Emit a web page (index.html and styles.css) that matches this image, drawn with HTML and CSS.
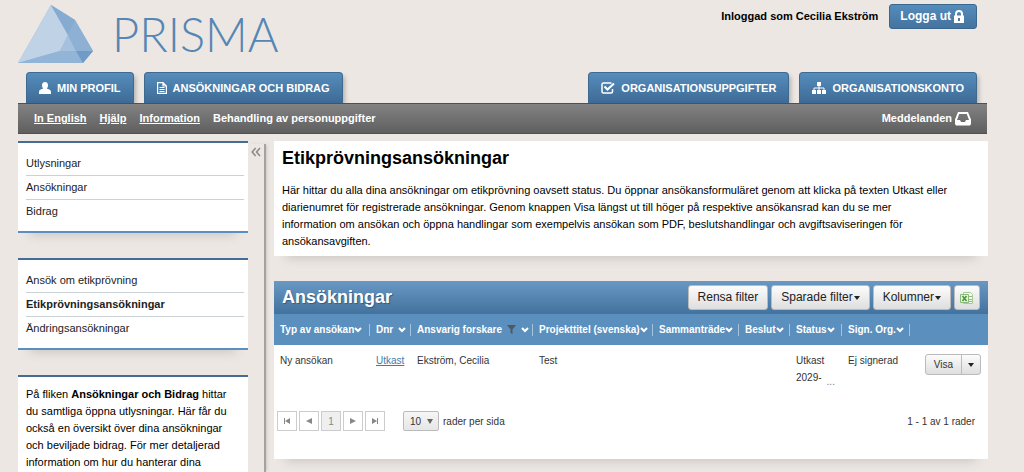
FILE: index.html
```html
<!DOCTYPE html>
<html lang="sv">
<head>
<meta charset="utf-8">
<meta name="viewport" content="width=device-width, initial-scale=1">
<title>Prisma – Etikprövningsansökningar</title>
<link rel="stylesheet" href="styles.css">
</head>
<body>
<div class="page">
  <header class="header">
    <div class="masthead">
      <a class="logo" href="#">
        <svg class="logo-mark" viewBox="0 0 76 60" width="76" height="60" aria-hidden="true">
          <path fill="#8fb3d6" d="M33 1 57 16 75 47 65 59H0z"/>
          <path fill="#c0d3e6" d="M33 1 50 31 42 47 0 59z"/>
          <path fill="#a5c1de" d="M50 31 58 47H42z"/>
          <path fill="#86abd0" d="M33 1 57 16 50 31z"/>
          <path fill="#8db0d4" d="M57 16 75 47H58L50 31z"/>
          <path fill="#92b4d7" d="M0 59 42 47H58L65 59z"/>
          <path fill="#709bc7" d="M58 47H75L65 59z"/>
        </svg>
        <span class="logo-name">PRISMA</span>
      </a>
      <div class="account">
        <span class="account-name">Inloggad som Cecilia Ekström</span>
        <button class="logout" type="button">Logga ut
          <svg width="10" height="13" viewBox="0 0 10 13" aria-hidden="true"><path fill="none" stroke="#fff" stroke-width="2" d="M2 6V4a3 3 0 0 1 6 0v2"/><path fill="#fff" fill-rule="evenodd" d="M0 5.500h10V13H0zM4 8v3h2V8z"/></svg>
        </button>
      </div>
    </div>
    <nav class="tabs" aria-label="Huvudmeny">
      <a class="tab" href="#"><svg width="12" height="12" viewBox="0 0 12 12" aria-hidden="true"><path fill="#fff" d="M6 0c2 0 3 1.300 3 3.200C9 5 8.300 6 7.600 6.600C10 7.200 12 8 12 10V12H0v-2C0 8 2 7.200 4.400 6.600C3.700 6 3 5 3 3.200 3 1.300 4 0 6 0z"/></svg>MIN PROFIL</a>
      <a class="tab" href="#"><svg width="10" height="12" viewBox="0 0 10 12" aria-hidden="true"><path fill="none" stroke="#fff" stroke-width="1.200" d="M.6.6h5.400l3.400 3.400v7.400H.6zM6 .6V4h3.400M2.500 5.500h5M2.500 7.500h5M2.500 9.500h5"/></svg>ANSÖKNINGAR OCH BIDRAG</a>
      <span class="tabs-gap"></span>
      <a class="tab" href="#"><svg width="14" height="12" viewBox="0 0 14 12" aria-hidden="true"><path fill="none" stroke="#fff" stroke-width="1.500" d="M11.500 7v2.500a1.500 1.500 0 0 1-1.500 1.500H2.500A1.500 1.500 0 0 1 1 9.500v-7A1.500 1.500 0 0 1 2.500 1H10.500"/><path fill="none" stroke="#fff" stroke-width="2" d="m3.500 4.500 3 3 6.500-6"/></svg>ORGANISATIONSUPPGIFTER</a>
      <a class="tab" href="#"><svg width="14" height="12" viewBox="0 0 14 12" aria-hidden="true"><path fill="#fff" d="M5 0h4v4H5zM0 8h4v4H0zM5 8h4v4H5zM10 8h4v4h-4z"/><path fill="none" stroke="#fff" stroke-width="1" d="M7 3v6M2 9V6h10v3"/></svg>ORGANISATIONSKONTO</a>
    </nav>
    <nav class="links" aria-label="Länkar">
      <a href="#">In English</a>
      <a href="#">Hjälp</a>
      <a href="#">Information</a>
      <a class="plain" href="#">Behandling av personuppgifter</a>
      <a class="plain messages" href="#">Meddelanden
        <svg width="16" height="14" viewBox="0 0 16 14" aria-hidden="true"><path fill="#fff" fill-rule="evenodd" d="M3 0h10l3 7.500V12l-1 1.500H1L0 12V7.500zM4.200 2 2 8h3l1 2h4l1-2h3l-2.200-6z"/></svg>
      </a>
    </nav>
  </header>

  <div class="body">
    <aside class="sidebar">
      <nav class="box menu" aria-label="Bidrag">
        <a href="#">Utlysningar</a>
        <a href="#">Ansökningar</a>
        <a href="#">Bidrag</a>
      </nav>
      <nav class="box menu" aria-label="Etikprövning">
        <a href="#">Ansök om etikprövning</a>
        <a href="#" class="current" aria-current="page">Etikprövningsansökningar</a>
        <a href="#">Ändringsansökningar</a>
      </nav>
      <section class="box info">
        <p>På fliken <strong>Ansökningar och Bidrag</strong> hittar<br>du samtliga öppna utlysningar. Här får du<br>också en översikt över dina ansökningar<br>och beviljade bidrag. För mer detaljerad<br>information om hur du hanterar dina</p>
      </section>
    </aside>
    <div class="divider">
      <button class="collapse" type="button" aria-label="Dölj menyn"><svg width="10" height="10" viewBox="0 0 10 10" aria-hidden="true"><path fill="none" stroke="#8a8886" stroke-width="1.500" d="M4.700 1 1.200 5l3.500 4M9 1 5.500 5 9 9"/></svg></button>
    </div>
    <main class="content">
      <section class="card intro">
        <h1>Etikprövningsansökningar</h1>
        <p>Här hittar du alla dina ansökningar om etikprövning oavsett status. Du öppnar ansökansformuläret genom att klicka på texten Utkast eller<br>diarienumret för registrerade ansökningar. Genom knappen Visa längst ut till höger på respektive ansökansrad kan du se mer<br>information om ansökan och öppna handlingar som exempelvis ansökan som PDF, beslutshandlingar och avgiftsaviseringen för<br>ansökansavgiften.</p>
      </section>
      <section class="card">
        <div class="toolbar">
          <h2>Ansökningar</h2>
          <button class="btn" type="button">Rensa filter</button>
          <button class="btn" type="button">Sparade filter<span class="caret"></span></button>
          <button class="btn" type="button">Kolumner<span class="caret"></span></button>
          <button class="btn btn-icon" type="button" aria-label="Exportera till Excel"><svg width="14" height="14" viewBox="0 0 14 14" aria-hidden="true"><path fill="#f5faf2" stroke="#a5cb95" d="M3.500 1.500h7l2 2v9h-9z"/><path stroke="#8fbd7c" d="M9 5.500h3M9 8.500h3M9 10.500h3"/><path fill="#e4f1dd" stroke="#8abb78" d="M.5 3.500h8v8h-8z"/><path stroke="#4c9140" stroke-width="1.500" d="m2.500 5 4 5M6.500 5l-4 5"/></svg></button>
        </div>
        <table class="grid">
          <colgroup><col class="c-type"><col class="c-dnr"><col class="c-researcher"><col class="c-title"><col class="c-meeting"><col class="c-decision"><col class="c-status"><col class="c-sign"><col class="c-action"></colgroup>
          <thead>
            <tr>
              <th scope="col"><span class="head">Typ av ansökan<svg class="chev" viewBox="0 0 8 6"><path d="m1 1 3 3 3-3"/></svg></span></th>
              <th scope="col"><span class="head spaced">Dnr<svg class="chev" viewBox="0 0 8 6"><path d="m1 1 3 3 3-3"/></svg></span></th>
              <th scope="col"><span class="head spaced">Ansvarig forskare<svg class="funnel" viewBox="0 0 9 9"><path d="M0 0h9L5.500 4.500V9l-2-1V4.500z"/></svg><svg class="chev" viewBox="0 0 8 6"><path d="m1 1 3 3 3-3"/></svg></span></th>
              <th scope="col"><span class="head">Projekttitel (svenska)<svg class="chev" viewBox="0 0 8 6"><path d="m1 1 3 3 3-3"/></svg></span></th>
              <th scope="col"><span class="head">Sammanträde<svg class="chev" viewBox="0 0 8 6"><path d="m1 1 3 3 3-3"/></svg></span></th>
              <th scope="col"><span class="head">Beslut<svg class="chev" viewBox="0 0 8 6"><path d="m1 1 3 3 3-3"/></svg></span></th>
              <th scope="col"><span class="head">Status<svg class="chev" viewBox="0 0 8 6"><path d="m1 1 3 3 3-3"/></svg></span></th>
              <th scope="col"><span class="head">Sign. Org.<svg class="chev" viewBox="0 0 8 6"><path d="m1 1 3 3 3-3"/></svg></span></th>
              <td></td>
            </tr>
          </thead>
          <tbody>
            <tr>
              <td>Ny ansökan</td>
              <td><a href="#">Utkast</a></td>
              <td>Ekström, Cecilia</td>
              <td>Test</td>
              <td></td>
              <td></td>
              <td>Utkast<br><span class="cut">2029-<span class="dots">...</span></span></td>
              <td>Ej signerad</td>
              <td class="action"><span class="split"><button type="button">Visa</button><button type="button" aria-label="Fler val"><span class="caret"></span></button></span></td>
            </tr>
          </tbody>
        </table>
        <div class="pager">
          <div class="pages">
            <button type="button" aria-label="Första sidan"><svg width="8" height="8" viewBox="0 0 8 8"><path d="M1 1h1v6H1zM7 1v6L2 4z"/></svg></button>
            <button type="button" aria-label="Föregående sida"><svg width="8" height="8" viewBox="0 0 8 8"><path d="M7 1v6L1 4z"/></svg></button>
            <button class="on" type="button">1</button>
            <button type="button" aria-label="Nästa sida"><svg width="8" height="8" viewBox="0 0 8 8"><path d="M1 1v6l6-3z"/></svg></button>
            <button type="button" aria-label="Sista sidan"><svg width="8" height="8" viewBox="0 0 8 8"><path d="M6 1h1v6H6zM1 1v6l5-3z"/></svg></button>
          </div>
          <span class="size"><select id="rows"><option>10</option></select><span class="size-arrow"></span></span>
          <label for="rows">rader per sida</label>
          <span class="count">1 - 1 av 1 rader</span>
        </div>
      </section>
    </main>
  </div>
</div>
</body>
</html>
```
FILE: styles.css
```css
* { box-sizing: border-box; }

body {
  margin: 0;
  background: #ece7e3;
  color: #000;
  font: 11px/17px "Liberation Sans", Arial, sans-serif;
}

h1, h2, p { margin: 0; }
a { color: inherit; }
button, select { font: inherit; color: inherit; margin: 0; cursor: pointer; }

.page {
  display: flex;
  flex-direction: column;
  min-height: 100vh;
  padding: 0 36px 0 18px;
}

/* Header */
.masthead {
  display: flex;
  justify-content: space-between;
  align-items: flex-start;
  height: 72px;
  padding: 4px 11px 0 0;
}
.logo { display: flex; gap: 18px; text-decoration: none; }
.logo-name {
  color: #5586b4;
  font: 300 47px/60px Lato, "Liberation Sans", sans-serif;
}
.account { display: flex; align-items: center; gap: 11px; }
.account-name { font-weight: bold; }
.logout {
  display: flex;
  align-items: center;
  gap: 3px;
  height: 25px;
  padding: 0 12px 0 10px;
  border: 1px solid #3b668e;
  border-radius: 3px;
  background: linear-gradient(#558cbb, #44739f);
  color: #fff;
  font-size: 12px;
  font-weight: bold;
}

.tabs { display: flex; gap: 10px; padding: 0 11px 0 8px; }
.tabs-gap { flex: 1; }
.tab {
  display: flex;
  align-items: center;
  gap: 6px;
  height: 31px;
  padding: 0 12px;
  border: 1px solid #40698f;
  border-bottom: 0;
  border-radius: 4px 4px 0 0;
  background: linear-gradient(#558dbc, #3e6a95);
  box-shadow: 3px 3px 4px -1px #b5b1ad;
  color: #fff;
  font-weight: bold;
  text-decoration: none;
  white-space: nowrap;
}

.links {
  position: relative;
  display: flex;
  align-items: center;
  gap: 13px;
  height: 31px;
  padding: 0 16px;
  margin: 0 1px 0 0;
  border-top: 1px solid #505050;
  border-bottom: 1px solid #505050;
  background: linear-gradient(#828282, #5f5f5f);
  color: #fff;
  font-weight: bold;
}
.links .plain { text-decoration: none; }
.links .messages { display: flex; align-items: center; gap: 3px; margin-left: auto; }

/* Columns */
.body { display: flex; flex: 1; margin-top: 7px; }
.sidebar { display: flex; flex-direction: column; gap: 25px; flex: 0 0 230px; }
.divider {
  flex: 0 0 18px;
  margin: 3px 8px 0 0;
  border-right: 2px solid #a5a19e;
  box-shadow: 2px 0 3px -1px #cbc7c3;
}
.collapse { display: flex; padding: 3px; border: 0; background: none; }
.content { display: flex; flex-direction: column; gap: 25px; flex: 1; min-width: 0; }

.box {
  padding: 9px 4px 8px 8px;
  border-top: 2px solid #446c94;
  border-bottom: 2px solid #5b8fc0;
  background: #fff;
  box-shadow: 0 14px 10px -12px #c9c5c1;
  color: #222;
}
.menu a {
  display: block;
  padding: 3px 0;
  border-bottom: 1px solid #c9d2d8;
  text-decoration: none;
}
.menu a:last-child { border-bottom: 0; }
.menu .current { font-weight: bold; }
.info { flex: 1; padding-bottom: 0; border-bottom: 0; color: #000; }

.card { background: #fff; box-shadow: 0 14px 10px -12px #c9c5c1; }
.intro { padding: 6px 8px; }
.intro h1 { margin-bottom: 13px; font-size: 18px; line-height: 22px; }

/* Table card */
.toolbar {
  display: flex;
  align-items: center;
  gap: 3px;
  height: 33px;
  padding: 0 8px;
  background: linear-gradient(#6898c3, #44729e);
}
.toolbar h2 {
  margin-right: auto;
  color: #fff;
  font-size: 18px;
  text-shadow: 1px 1px 1px #375b7d;
}
.btn {
  display: flex;
  align-items: center;
  gap: 1px;
  height: 25px;
  padding: 0 9px;
  border: 1px solid #bbb;
  border-radius: 3px;
  background: linear-gradient(#fcfcfc, #dedede);
  color: #222;
  font-size: 12px;
  white-space: nowrap;
}
.btn-icon { padding: 0 5px; }
.caret { border: 3px solid transparent; border-top: 4px solid #222; border-bottom: 0; }

.grid { width: 100%; table-layout: fixed; border-collapse: collapse; font-size: 10px; }
.c-type { width: 96px; }
.c-dnr { width: 41px; }
.c-researcher { width: 122px; }
.c-title { width: 120px; }
.c-meeting { width: 86px; }
.c-decision { width: 51px; }
.c-status { width: 52px; }
.c-sign { width: 68px; }
.c-action { width: 78px; }
.grid thead { background: #5b8fbe; }
.grid th { padding: 0; text-align: left; white-space: nowrap; }
.grid thead tr { height: 31px; }
.head {
  display: flex;
  align-items: center;
  height: 12px;
  padding: 0 2px 0 6px;
  border-right: 1px solid #a6c4de;
  color: #fff;
}
.spaced { gap: 5px; }
.chev { flex: 0 0 8px; height: 6px; fill: none; stroke: #fff; stroke-width: 2; }
.funnel { flex: 0 0 9px; height: 9px; fill: #4d5964; }
.grid tbody td { padding: 7px 0 7px 6px; color: #333; vertical-align: top; white-space: nowrap; }
.grid tbody a { color: #4679a8; }
.cut { display: flex; align-items: flex-end; gap: 5px; }
.dots { color: #777; line-height: 8px; }
.grid tbody .action { text-align: right; padding-right: 7px; }
.split { display: inline-flex; height: 21px; margin-top: 2px; border: 1px solid #bbb; border-radius: 3px; background: linear-gradient(#fcfcfc, #dedede); }
.split button { display: flex; align-items: center; padding: 0 8px; border: 0; background: none; }
.split button + button { padding: 0 6px; border-left: 1px solid #bbb; }

.pager { display: flex; align-items: center; padding: 18px 13px 28px 3px; color: #333; font-size: 10px; }
.pages { display: flex; gap: 2px; }
.pages button {
  display: flex;
  align-items: center;
  justify-content: center;
  width: 20px;
  height: 20px;
  padding: 0;
  border: 1px solid #ccc;
  background: #fff;
  color: #888;
  fill: #888;
}
.pages .on { background: #efefef; }
.size { position: relative; margin: 0 4px 0 18px; }
.size select {
  display: block;
  appearance: none;
  width: 36px;
  height: 20px;
  padding: 0 6px;
  border: 1px solid #bbb;
  border-radius: 2px;
  background: linear-gradient(#f6f6f6, #e6e6e6);
}
.size-arrow {
  position: absolute;
  top: 8px;
  right: 6px;
  border: 3px solid transparent;
  border-top: 5px solid #666;
  border-bottom: 0;
  pointer-events: none;
}
.count { margin-left: auto; }
```
